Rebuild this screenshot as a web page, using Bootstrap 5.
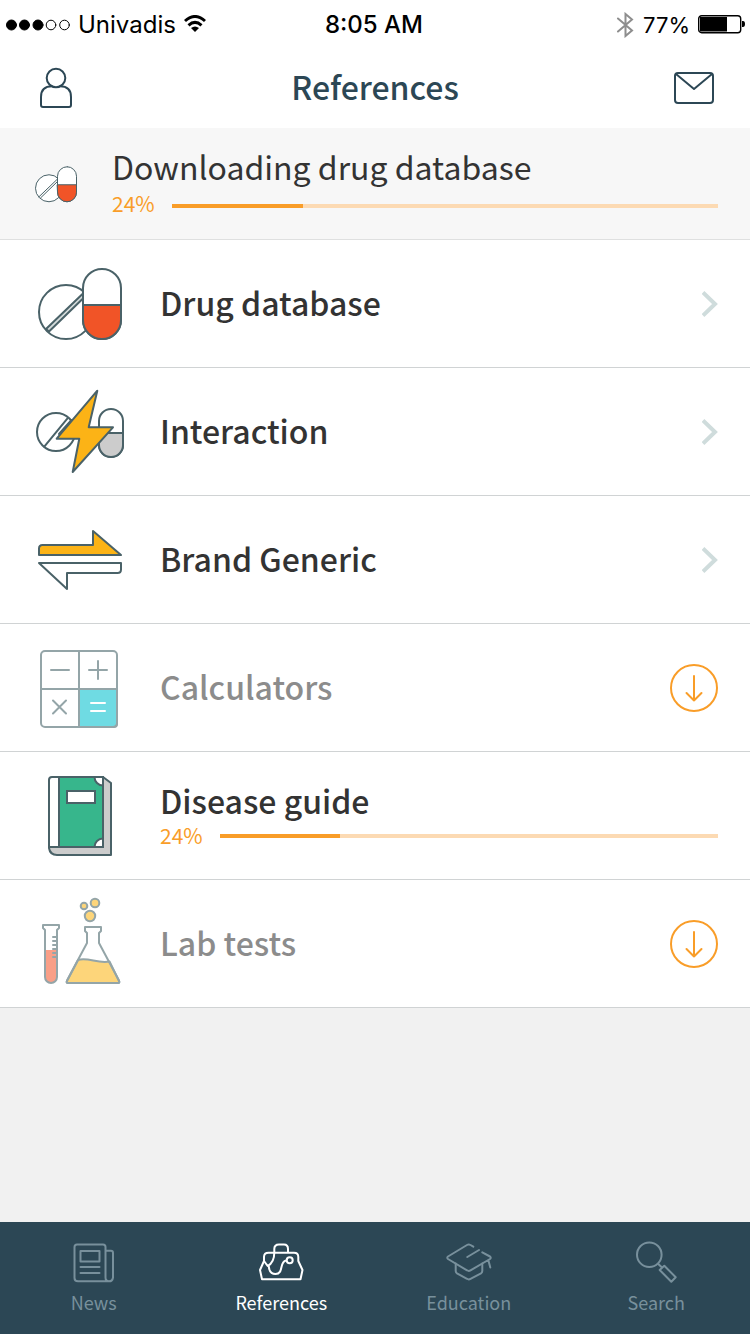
<!DOCTYPE html>
<html lang="en">
<head>
<meta charset="utf-8">
<meta name="viewport" content="width=device-width, initial-scale=1">
<title>References</title>
<link href="https://cdn.jsdelivr.net/npm/bootstrap@5.3.0/dist/css/bootstrap.min.css" rel="stylesheet">
<style>
  :root { --ink: #2c4755; --line: #4a6268; --orange: #f99d28; --rule: #d0d3d4; }
  body { font-family: "Noto Sans CJK SC", "Noto Sans", sans-serif; color: #333; background: #f1f1f1; }
  svg { display: block; flex: none; fill: none; stroke-linecap: round; stroke-linejoin: round; }
  .status { height: 48px; padding: 2px 8px 0 6px; font: 24px/46px Inter, sans-serif; color: #000; }
  .status-side { flex: 1 1 0; }
  .charge { font-size: 22px; }
  .topbar { height: 80px; color: var(--ink); stroke: var(--ink); }
  .topbar h1 { font-size: 32px; line-height: 48px; font-weight: 500; }
  .download { height: 112px; background: #f7f7f7; border-bottom: 1px solid #dfe0e0; }
  .download-title { font-size: 32px; line-height: 40px; }
  .percent { width: 44px; font-size: 21px; line-height: 22px; padding-bottom: 2px; color: var(--orange); }
  .download .percent { line-height: 18px; padding-bottom: 6px; }
  .progress.thin { height: 4px; border-radius: 0; background: #fcdab3; }
  .thin .progress-bar { background: var(--orange); }
  .ref-row { height: 128px; padding: 0 32px; gap: 32px; border-color: var(--rule); color: #333; }
  .list-group-flush > .ref-row:last-child { border-bottom-width: 1px; }
  .ref-name { font-size: 32px; line-height: 40px; font-weight: 500; }
  .pending .ref-name { color: #8c8c8c; }
  .art { stroke: var(--line); stroke-width: 2; }
  .pending .art { stroke: #94a5a8; }
  .tabs { height: 112px; background: var(--ink); }
  .tabs .nav-link { color: #78909c; padding: 16px 0 0; font-size: 18px; line-height: 32px; stroke: currentColor; stroke-width: 2; }
  .tabs .nav-link.active { color: #fff; }
</style>
</head>
<body class="d-flex flex-column min-vh-100">

<div class="status bg-white d-flex align-items-center">
  <div class="status-side d-flex align-items-center gap-2">
    <svg width="64" height="12" viewBox="0 0 64 12" stroke="#000" aria-hidden="true"><g fill="#000"><circle cx="5.500" cy="6" r="5"/><circle cx="18.500" cy="6" r="5"/><circle cx="32" cy="6" r="5"/></g><circle cx="45" cy="6" r="4.800"/><circle cx="58.500" cy="6" r="4.800"/></svg>
    <span>Univadis</span>
    <svg width="22" height="20" viewBox="4 1 22 20" stroke="#000" stroke-width="3" style="stroke-linecap:butt" aria-hidden="true"><path d="M5 7Q15-2 25 7M8.500 11.300Q15 5.500 21.500 11.300"/><path d="M11 14Q15 11 19 14L15 18Z" fill="#000" stroke="none"/></svg>
  </div>
  <strong class="fw-medium">8:05 AM</strong>
  <div class="status-side d-flex align-items-center justify-content-end gap-2">
    <svg width="20" height="26" viewBox="0 0 20 26" stroke="#8e8e8e" stroke-width="2" aria-hidden="true"><path d="M3 6.500 17 18.500 10.500 24V2L17 7.500 3 19.500" stroke-linejoin="miter"/></svg>
    <span class="charge">77%</span>
    <svg width="44" height="20" viewBox="0 0 44 20" overflow="visible" aria-hidden="true"><rect x=".7" y=".700" width="42" height="17" rx="3" stroke="#000" stroke-width="1.400"/><path d="M2 2H29V16.500H2ZM44 6h1q2 0 2 3t-2 3h-1Z" fill="#000"/></svg>
  </div>
</div>

<header class="topbar bg-white d-flex align-items-center justify-content-between px-4">
  <button type="button" class="btn border-0 p-2" aria-label="Profile">
    <svg width="48" height="48" viewBox="0 0 48 48" stroke-width="2"><circle cx="24" cy="14" r="9.300"/><path d="M20 22.300C12 22.300 9 27 9 33V41Q9 43 11 43H37Q39 43 39 41V33C39 27 36 22.300 28 22.300"/></svg>
  </button>
  <h1 class="m-0 pb-1">References</h1>
  <button type="button" class="btn border-0 p-2" aria-label="Messages">
    <svg width="48" height="48" viewBox="0 0 48 48" stroke-width="2"><rect x="5" y="9" width="38" height="30" rx="3"/><path d="M6 10 24 25 42 10"/></svg>
  </button>
</header>

<section class="download d-flex align-items-center px-4 gap-4">
  <svg class="ms-2 me-2" width="48" height="64" viewBox="0 0 96 127" stroke="#4a6268" stroke-width="2" aria-hidden="true"><circle cx="34" cy="72" r="27" fill="#fff"/><path d="M14 89 51 53.500M17 91.500 51 58.500"/><rect x="51" y="29" width="38" height="70" rx="19" fill="#fff"/><path d="M51 65H89V80A19 19 0 0 1 51 80Z" fill="#f15427"/></svg>
  <div class="flex-grow-1 me-2 pb-1">
    <div class="download-title">Downloading drug database</div>
    <div class="d-flex align-items-center gap-3 mt-2">
      <span class="percent">24%</span>
      <div class="progress thin flex-grow-1" role="progressbar" aria-label="Drug database download" aria-valuenow="24" aria-valuemin="0" aria-valuemax="100"><div class="progress-bar" style="width:24%"></div></div>
    </div>
  </div>
</section>

<main class="list-group list-group-flush rounded-0">
  <a href="#drugs" class="list-group-item ref-row d-flex align-items-center">
    <svg class="art" width="96" height="127" viewBox="0 0 96 127" aria-hidden="true"><circle cx="34" cy="72" r="27"/><path d="M14 89 51 53.500V58.500L17 91.500Z" fill="#d5dcdc"/><rect x="51" y="29" width="38" height="70" rx="19" fill="#fff"/><path d="M51 65H89V80A19 19 0 0 1 51 80Z" fill="#f15427"/></svg>
    <span class="ref-name flex-grow-1 pb-1">Drug database</span>
    <svg width="16" height="28" viewBox="0 0 16 28" stroke="#cfdcdc" stroke-width="4" style="stroke-linecap:butt" aria-hidden="true"><path d="M1 2.500 13 14 1 25.500" stroke-linejoin="miter"/></svg>
  </a>
  <a href="#interaction" class="list-group-item ref-row d-flex align-items-center">
    <svg class="art" width="96" height="127" viewBox="0 0 96 127" aria-hidden="true"><circle cx="24" cy="64" r="19"/><path d="M12.300 78.700 35.500 50.300M27 66 39.500 52"/><rect x="67" y="41" width="24" height="48" rx="12" fill="#fff"/><path d="M67 65H91V77A12 12 0 0 1 67 77Z" fill="#ccc"/><path d="M65.300 22.700 56.700 59.300H81L40.700 104 47.300 70.700H24.700Z" fill="#fcb316"/></svg>
    <span class="ref-name flex-grow-1 pb-1">Interaction</span>
    <svg width="16" height="28" viewBox="0 0 16 28" stroke="#cfdcdc" stroke-width="4" style="stroke-linecap:butt" aria-hidden="true"><path d="M1 2.500 13 14 1 25.500" stroke-linejoin="miter"/></svg>
  </a>
  <a href="#brand" class="list-group-item ref-row d-flex align-items-center">
    <svg class="art" width="96" height="127" viewBox="0 0 96 127" aria-hidden="true"><path d="M7 59V52.500Q7 49 10.500 49H61V35L89 59Z" fill="#fcb316"/><path d="M7 67H89V73.500Q89 77 85.500 77H35V93Z"/></svg>
    <span class="ref-name flex-grow-1 pb-1">Brand Generic</span>
    <svg width="16" height="28" viewBox="0 0 16 28" stroke="#cfdcdc" stroke-width="4" style="stroke-linecap:butt" aria-hidden="true"><path d="M1 2.500 13 14 1 25.500" stroke-linejoin="miter"/></svg>
  </a>
  <div class="list-group-item ref-row pending d-flex align-items-center">
    <svg class="art" width="96" height="127" viewBox="0 0 96 127" aria-hidden="true"><path d="M47 65H85V100Q85 103 82 103H47Z" fill="#6fdbe3"/><rect x="9" y="27" width="76" height="76" rx="4"/><path d="M47 27V103M9 65H85M19 46H37M57 46H75M66 37V55M21 76.500 34 89.500M34 76.500 21 89.500"/><path d="M59 79H73M59 87H73" stroke="#fff"/></svg>
    <span class="ref-name flex-grow-1 pb-1">Calculators</span>
    <button type="button" class="btn border-0 p-0" aria-label="Download Calculators"><svg width="48" height="48" viewBox="0 0 48 48" stroke="#f99d28" stroke-width="2"><circle cx="24" cy="24" r="23"/><path d="M24 12V36.500M16.500 29 24 36.500 31.500 29"/></svg></button>
  </div>
  <a href="#diseases" class="list-group-item ref-row d-flex align-items-center">
    <svg class="art" width="96" height="127" viewBox="0 0 96 127" aria-hidden="true"><path d="M17 93V96Q18 103 25 103H79V31L71 25Z" fill="#ccc"/><path d="M71 25H20Q17 25 17 28V95H71Z" fill="#fff"/><path d="M27 25H71V95H27Z" fill="#37b68c"/><path d="M62.500 25A8.500 8.500 0 0 0 71 33.500V25ZM62.500 95A8.500 8.500 0 0 1 71 86.500V95Z" fill="#fff"/><rect x="35" y="39" width="28" height="12" fill="#fff" stroke-linejoin="miter"/></svg>
    <div class="flex-grow-1 pb-1">
      <div class="ref-name">Disease guide</div>
      <div class="d-flex align-items-center gap-3 mt-1">
        <span class="percent">24%</span>
        <div class="progress thin flex-grow-1" role="progressbar" aria-label="Disease guide download" aria-valuenow="24" aria-valuemin="0" aria-valuemax="100"><div class="progress-bar" style="width:24%"></div></div>
      </div>
    </div>
  </a>
  <div class="list-group-item ref-row pending d-flex align-items-center">
    <svg class="art" width="96" height="127" viewBox="0 0 96 127" aria-hidden="true"><path d="M13 70H25V97A6 6 0 0 1 13 97Z" fill="#f99f87" stroke="none"/><path d="M11 45H27V48L25 50V97A6 6 0 0 1 13 97V50L11 48ZM21 57H25M21 61H25M21 65H25M21 69H25M21 73H25M21 77H25"/><path d="M46 80C56 77 66 84 77.500 81.500L87 101Q88 103 86 103H36Q34 103 35 101Z" fill="#fdd57a"/><path d="M53 47H69V51L67 53V63L87 100.500Q88 103 86 103H36Q34 103 35 100.500L55 63V53L53 51Z"/><g fill="#fdd57a"><circle cx="58" cy="36" r="5.200"/><circle cx="52" cy="26" r="3.300"/><circle cx="63" cy="23" r="4.300"/></g></svg>
    <span class="ref-name flex-grow-1 pb-1">Lab tests</span>
    <button type="button" class="btn border-0 p-0" aria-label="Download Lab tests"><svg width="48" height="48" viewBox="0 0 48 48" stroke="#f99d28" stroke-width="2"><circle cx="24" cy="24" r="23"/><path d="M24 12V36.500M16.500 29 24 36.500 31.500 29"/></svg></button>
  </div>
</main>

<nav class="tabs nav nav-justified mt-auto" aria-label="Sections">
  <a class="nav-link d-flex flex-column align-items-center" href="#news">
    <svg width="48" height="48" viewBox="0 0 48 48" aria-hidden="true"><path d="M39 43.300H8Q4.500 43.300 4.500 40V9Q4.500 6.500 7 6.500H33Q35.500 6.500 35.500 9V39.500Q35.500 43.300 39 43.300T43 39.500V15Q43 12.700 41 12.700H35.500"/><path d="M10.500 13H29.500V23.500H10.500ZM10.500 29H29.500M10.500 35H29.500"/></svg>
    <span>News</span>
  </a>
  <a class="nav-link active d-flex flex-column align-items-center" href="#references" aria-current="page">
    <svg width="48" height="48" viewBox="0 0 48 48" aria-hidden="true"><path d="M17.300 14.700V11Q17.300 6.500 22 6.500H27Q31 6.500 31 11V14.700M11.500 14.700H37Q41.300 14.700 41.300 19V23L45.500 32 43.500 41.300H5L3 32 7 23V19Q7 14.700 11.500 14.700Z"/><path d="M7 23 10.700 28C16 25 17.300 20 17.300 14.700M11.700 28C12 33 14.500 36 18.500 36C27 36 22 24 29 22.500"/><circle cx="32.700" cy="22.300" r="3"/></svg>
    <span>References</span>
  </a>
  <a class="nav-link d-flex flex-column align-items-center" href="#education">
    <svg width="48" height="48" viewBox="0 0 48 48" aria-hidden="true"><path d="M28.300 8.700 25.500 7Q23.700 6 22 7L3 18.500Q1.500 19.700 3 21L22 32.300Q23.700 33.500 25.500 32.300L45 21Q46.500 19.700 45 18.500L37.300 14.300M34 12 22.300 19M43.300 22 45.300 29.500"/><path d="M10.700 25.500V33Q10.700 34.500 12 35.300L22 40.800Q23.700 42 25.500 40.800L36 35.300Q37.300 34.500 37.300 33V25.500"/></svg>
    <span>Education</span>
  </a>
  <a class="nav-link d-flex flex-column align-items-center" href="#search">
    <svg width="48" height="48" viewBox="0 0 48 48" aria-hidden="true"><circle cx="17.300" cy="16.700" r="12.300"/><path d="M26.300 26 29.700 29.300M32.300 27.700 43.700 39.300 39.300 43.700 27.700 32Z"/></svg>
    <span>Search</span>
  </a>
</nav>
<script src="https://cdn.jsdelivr.net/npm/bootstrap@5.3.0/dist/js/bootstrap.bundle.min.js"></script>
</body>
</html>
